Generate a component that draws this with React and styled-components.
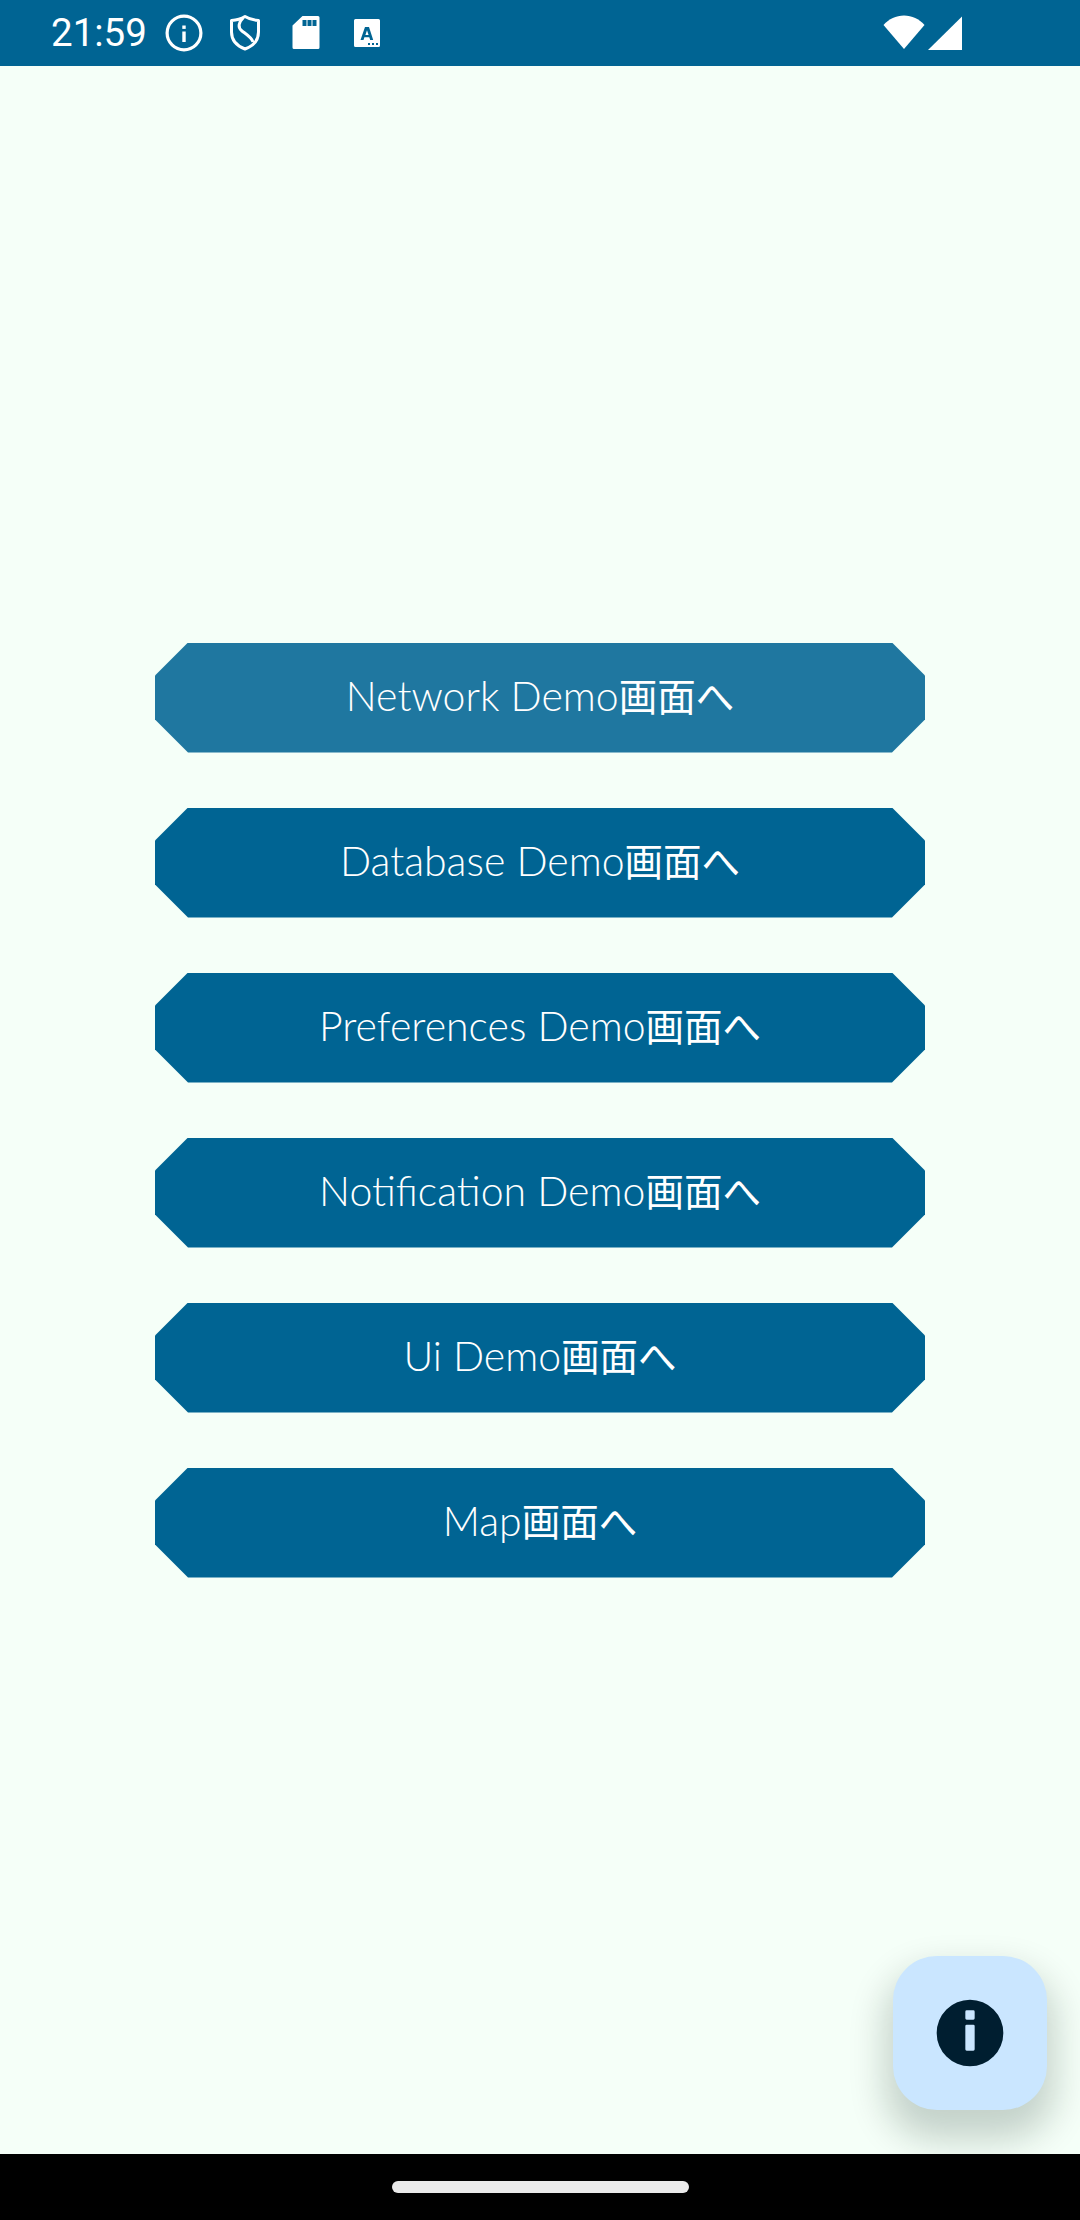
import React from "react";
import styled, { createGlobalStyle } from "styled-components";

const GlobalStyle = createGlobalStyle`
  html, body {
    margin: 0;
    padding: 0;
    background: #f5fff8;
  }
`;

const Screen = styled.div`
  width: 1080px;
  height: 2220px;
  display: flex;
  flex-direction: column;
  overflow: hidden;
  background: #f5fff8;
`;

const StatusBar = styled.div`
  height: 66px;
  flex: none;
  display: flex;
  align-items: center;
  justify-content: space-between;
  padding: 0 113px 0 51px;
  background: #006493;
  color: #fff;
`;

const StatusLeft = styled.div`
  display: flex;
  align-items: center;
  gap: 17px;
`;

const Clock = styled.span`
  font-family: Roboto, sans-serif;
  font-size: 38.5px;
  line-height: 66px;
  margin-right: -2px;
`;

const StatusRight = styled.div`
  display: flex;
  align-items: center;
`;

const StatusIcon = styled.svg`
  width: 44px;
  height: 44px;
  display: block;
  fill: #fff;
`;

const WifiIcon = styled(StatusIcon)`
  margin-right: -3px;
`;

const OutlineIcon = styled(StatusIcon)`
  fill: none;
  stroke: #fff;
  stroke-width: 3;
  stroke-linejoin: round;
`;

const Main = styled.main`
  flex: 1;
  position: relative;
  overflow: hidden;
  display: flex;
  flex-direction: column;
  align-items: center;
  justify-content: center;
  gap: 55px;
`;

const MenuButton = styled.button`
  width: 770px;
  height: 110px;
  flex: none;
  border: none;
  padding: 6px 0 0;
  display: block;
  text-align: center;
  color: #fff;
  background: ${(p) => (p.$focused ? "#1f77a0" : "#006493")};
  clip-path: polygon(33px 0, 737px 0, 770px 33px, 770px 77px, 737px 110px, 33px 110px, 0 77px, 0 33px);
  line-height: 50px;
`;

const LatinLabel = styled.span`
  font-family: Lato, sans-serif;
  font-weight: 300;
  font-size: 41px;
`;

const KanjiLabel = styled.span`
  font-family: "Noto Sans CJK JP", sans-serif;
  font-weight: 400;
  font-size: 38.5px;
`;

const Fab = styled.button`
  position: absolute;
  right: 33px;
  bottom: 44px;
  width: 154px;
  height: 154px;
  border: none;
  border-radius: 44px;
  padding: 0;
  display: flex;
  align-items: center;
  justify-content: center;
  background: #cae6ff;
  box-shadow: 0 22px 36px 8px rgba(0, 30, 20, 0.2);
`;

const FabIcon = styled.svg`
  width: 80px;
  height: 80px;
  fill: #001e30;
`;

const NavBar = styled.div`
  height: 66px;
  flex: none;
  display: flex;
  align-items: center;
  justify-content: center;
  background: #000;
`;

const NavPill = styled.div`
  width: 297px;
  height: 12px;
  border-radius: 6px;
  background: #eaeaea;
`;

const items = ["Network Demo", "Database Demo", "Preferences Demo", "Notification Demo", "Ui Demo", "Map"];

export default function App() {
  return (
    <Screen>
      <GlobalStyle />
      <StatusBar>
        <StatusLeft>
          <Clock>21:59</Clock>
          <StatusIcon viewBox="0 0 44 44">
            <path fillRule="evenodd" d="M22 3.500a18.500 18.500 0 1 0 0 37 18.500 18.500 0 0 0 0-37zm0 3.200a15.300 15.300 0 1 1 0 30.600 15.300 15.300 0 0 1 0-30.600z" />
            <rect x="20.300" y="14.500" width="3.400" height="3.400" />
            <rect x="20.300" y="20.500" width="3.400" height="10.500" />
          </StatusIcon>
          <OutlineIcon viewBox="0 0 44 44">
            <path d="M22 5.500C26 8 31 9.200 35.500 9.500V21C35.500 29 30 35 22 38 14 35 8.500 29 8.500 21V9.500C13 9.200 18 8 22 5.500Z" />
            <path d="M20 7C15.500 11.500 14.500 16.500 19 20 25 24.500 29 27 30 31" />
          </OutlineIcon>
          <StatusIcon viewBox="0 0 44 44">
            <path fillRule="evenodd" d="M18.500 5H34a1.500 1.500 0 0 1 1.500 1.500v30A1.500 1.500 0 0 1 34 38H10a1.500 1.500 0 0 1-1.500-1.500V14.500L18.500 5zm0 4v6h4V9h-4zm5 0v6h4V9h-4zm5 0v6h4V9h-4z" />
          </StatusIcon>
          <StatusIcon viewBox="0 0 44 44">
            <path fillRule="evenodd" d="M10.500 8h23A1.500 1.500 0 0 1 35 9.500v25a1.500 1.500 0 0 1-1.500 1.500h-23A1.500 1.500 0 0 1 9 34.500v-25A1.500 1.500 0 0 1 10.500 8zm9.500 8-4.500 13h3l.9-2.800h4.900l.9 2.800h3L24 16h-4zm2 3.200 1.600 4.700h-3.200L22 19.200zM23 32v2h2v-2h-2zm4 0v2h2v-2h-2zm4 0v2h2v-2h-2z" />
          </StatusIcon>
        </StatusLeft>
        <StatusRight>
          <WifiIcon viewBox="0 0 44 44">
            <path d="M22 38 1.500 14C7 8 14 4.500 22 4.500S37 8 42.500 14L22 38z" />
          </WifiIcon>
          <StatusIcon viewBox="0 0 44 44">
            <path d="M39 5.500V39H5L39 5.500z" />
          </StatusIcon>
        </StatusRight>
      </StatusBar>
      <Main>
        {items.map((item, i) => (
          <MenuButton key={item} $focused={i === 0}>
            <LatinLabel>{item}</LatinLabel>
            <KanjiLabel>画面へ</KanjiLabel>
          </MenuButton>
        ))}
        <Fab>
          <FabIcon viewBox="0 0 24 24">
            <path fillRule="evenodd" d="M12 2a10 10 0 1 0 0 20 10 10 0 0 0 0-20zm-1.400 3.600a.4.4 0 0 1 .4-.4h2a.4.4 0 0 1 .4.4v2a.4.4 0 0 1-.4.4h-2a.4.4 0 0 1-.4-.4v-2zm0 4.300a.4.4 0 0 1 .4-.4h2a.4.4 0 0 1 .4.4v7a.4.4 0 0 1-.4.4h-2a.4.4 0 0 1-.4-.4v-7z" />
          </FabIcon>
        </Fab>
      </Main>
      <NavBar>
        <NavPill />
      </NavBar>
    </Screen>
  );
}
